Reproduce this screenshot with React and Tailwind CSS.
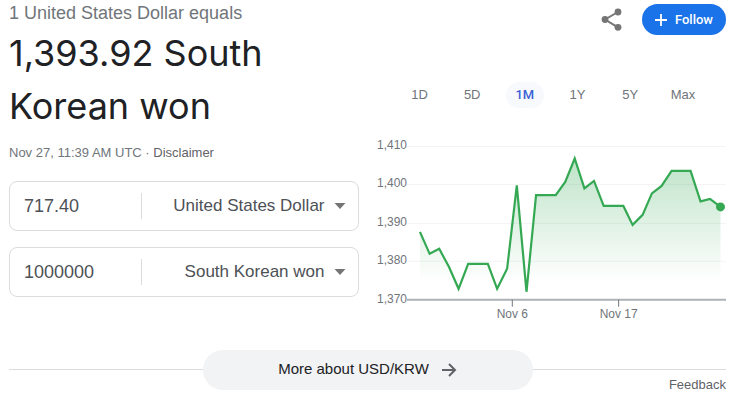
import React from "react";

const ranges = ["1D", "5D", "1M", "1Y", "5Y", "Max"];

const gridLines = [
  { label: "1,410", y: 10 },
  { label: "1,400", y: 48 },
  { label: "1,390", y: 87 },
  { label: "1,380", y: 125 },
];

const points =
  "43,96 52.7,118 62.3,113 72,131 81.7,153 91.3,128 111,128 120.3,153 130.3,133 140,49.5 149.7,156 159.3,59.3 179,59.3 188.5,46 198,22.5 207.7,52.5 217.3,45 227,70 246.7,70 256,89 266,79 275.3,57.5 285,50 295,35 314,35 324,65.5 333.5,63 344,71";

function ShareIcon() {
  return (
    <svg viewBox="0 0 24 24" className="size-6 fill-[#757575]" aria-hidden="true">
      <circle cx="5" cy="11.5" r="3.4" />
      <circle cx="18" cy="4" r="3.4" />
      <circle cx="18" cy="19.3" r="3.4" />
      <path d="M18 4 5 11.5l13 7.8" fill="none" stroke="#757575" strokeWidth="2" />
    </svg>
  );
}

function Converter({ amount, currency }) {
  return (
    <div className="flex h-[50px] items-center rounded-lg border border-[#dadce0] pr-3 pl-[14px] text-[#4d5156]">
      <input
        type="text"
        aria-label={"Amount in " + currency}
        defaultValue={amount}
        className="h-7 w-[117px] min-w-0 shrink-0 bg-transparent text-[18px] outline-none"
      />
      <div className="h-[26px] w-px shrink-0 bg-[#dadce0]" />
      <div className="grid min-w-0 flex-1 items-center">
        <select
          aria-label="Currency"
          defaultValue={currency}
          className="col-start-1 row-start-1 h-7 w-full appearance-none bg-transparent pr-[21px] text-[17px] outline-none [text-align-last:right]"
        >
          <option>{currency}</option>
        </select>
        <svg viewBox="0 0 12 6" className="pointer-events-none col-start-1 row-start-1 h-[6px] w-3 justify-self-end fill-[#757575]" aria-hidden="true">
          <path d="M0.5 0h11L6 6z" />
        </svg>
      </div>
    </div>
  );
}

function Chart() {
  return (
    <svg viewBox="0 0 350 190" className="w-full text-[12px]" role="img" aria-label="USD to KRW, one month">
      <defs>
        <linearGradient id="area" x1="0" y1="22" x2="0" y2="160" gradientUnits="userSpaceOnUse">
          <stop offset="0" stopColor="#34a853" stopOpacity="0.32" />
          <stop offset="0.9" stopColor="#34a853" stopOpacity="0" />
        </linearGradient>
      </defs>
      {gridLines.map((line) => (
        <g key={line.label}>
          <path d={`M30 ${line.y + 0.5}H350`} stroke="#f3f4f5" />
          <text x="30" y={line.y + 3} textAnchor="end" fill="#70757a">{line.label}</text>
        </g>
      ))}
      <polygon points={`43,160 ${points} 344,160`} fill="url(#area)" />
      <path d="M30 164H350" stroke="#aeb2b6" strokeWidth="2" />
      <path d="M135.5 164v7M242 164v7" stroke="#70757a" />
      <text x="30" y="167" textAnchor="end" fill="#70757a">1,370</text>
      <text x="135.5" y="182" textAnchor="middle" fill="#70757a">Nov 6</text>
      <text x="242" y="182" textAnchor="middle" fill="#70757a">Nov 17</text>
      <polyline points={points} fill="none" stroke="#34a853" strokeWidth="2.2" />
      <circle cx="344" cy="71" r="4.5" fill="#34a853" />
    </svg>
  );
}

export default function App() {
  return (
    <main className="bg-white pr-[11px] pl-[9px] font-['Liberation_Sans',Arial,sans-serif] text-[13px] text-[#5f6368]">
      <div className="grid grid-cols-2 gap-x-[18px]">
        <section>
          <h1>
            <span className="block pt-[2px] text-[18px] leading-[22px] text-[#70757a]">1 United States Dollar equals</span>
            <span className="mt-[3px] block font-['Inter',sans-serif] text-[36px] leading-[53px] text-[#202124]">
              1,393.92 South Korean won
            </span>
          </h1>
          <p className="mt-[10px] leading-5 text-[#70757a]">
            Nov 27, 11:39 AM UTC · <a href="#disclaimer" className="text-[#5f6368]">Disclaimer</a>
          </p>
          <div className="mt-[18px] flex flex-col gap-4">
            <Converter amount="717.40" currency="United States Dollar" />
            <Converter amount="1000000" currency="South Korean won" />
          </div>
        </section>

        <section>
          <div className="flex items-center justify-end gap-[18px] pt-1">
            <button type="button" aria-label="Share"><ShareIcon /></button>
            <button type="button" className="flex h-[31px] items-center gap-2 rounded-full bg-[#1a73e8] px-[13px] font-['Roboto',sans-serif] text-[13px] font-medium text-white">
              <svg viewBox="0 0 12 12" className="size-3" aria-hidden="true">
                <path d="M6 0v12M0 6h12" stroke="white" strokeWidth="1.8" />
              </svg>
              Follow
            </button>
          </div>
          <div className="mt-[47px] flex justify-between px-6">
            {ranges.map((range) => (
              <button
                key={range}
                type="button"
                className={
                  range === "1M"
                    ? "h-[26px] w-[38px] rounded-full bg-[#f8f9fc] font-['Roboto',sans-serif] font-medium text-[#3b5fd6]"
                    : "h-[26px] w-[38px] text-[#70757a]"
                }
              >
                {range}
              </button>
            ))}
          </div>
          <div className="mt-7">
            <Chart />
          </div>
        </section>
      </div>

      <div className="mt-6 flex items-center">
        <div className="h-px flex-1 bg-[#dadce0]" />
        <a href="#more" className="flex h-10 w-[330px] items-center justify-center gap-3 rounded-full bg-[#f1f3f4] text-[15px] text-[#202124]">
          More about USD/KRW
          <svg viewBox="0 0 16 16" className="size-4" aria-hidden="true">
            <path d="M1 8h13M8 2l6 6-6 6" fill="none" stroke="#5f6368" strokeWidth="2" />
          </svg>
        </a>
        <div className="h-px flex-1 bg-[#dadce0]" />
      </div>
      <div className="-mt-[15px] flex justify-end">
        <a href="#feedback" className="leading-5">Feedback</a>
      </div>
    </main>
  );
}
